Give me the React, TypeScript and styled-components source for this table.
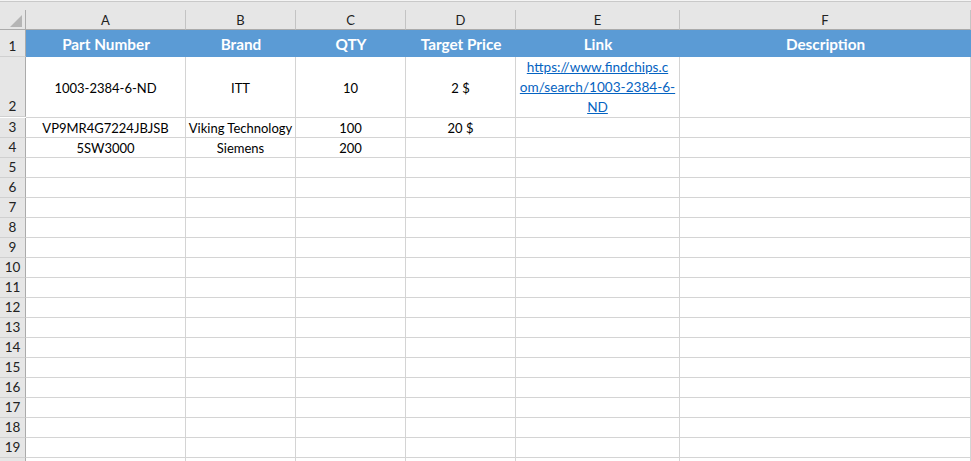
import React from 'react'
import styled, { createGlobalStyle } from 'styled-components'

const GlobalStyle = createGlobalStyle`
    html, body {
        margin: 0;
        padding: 0;
        background: #ffffff;
        overflow: hidden;
    }
    body {
        font-family: Lato, "Open Sans", sans-serif;
    }
`

const columns = [
    { key: 'A', width: 160, title: 'Part Number' },
    { key: 'B', width: 110, title: 'Brand' },
    { key: 'C', width: 110, title: 'QTY' },
    { key: 'D', width: 110, title: 'Target Price' },
    { key: 'E', width: 164, title: 'Link' },
    { key: 'F', width: 291, title: 'Description' },
]

type RowData = { height: number, cells: (string | null)[], link?: string[] }

const rows: RowData[] = [
    { height: 60, cells: ['1003-2384-6-ND', 'ITT', '10', '2 $', null, ''], link: ['https://www.findchips.c', 'om/search/1003-2384-6-', 'ND'] },
    { height: 20, cells: ['VP9MR4G7224JBJSB', 'Viking Technology', '100', '20 $', '', ''] },
    { height: 20, cells: ['5SW3000', 'Siemens', '200', '', '', ''] },
    ...Array.from({ length: 16 }, () => ({ height: 20, cells: ['', '', '', '', '', ''] })),
]

export default function App() {
    const template = `26px ${columns.map(c => c.width + 'px').join(' ')}`
    return (
        <>
            <GlobalStyle />
            <Sheet>
                <TopStrip />
                <Grid $columns={template}>
                    <Corner>
                        <svg width="12" height="12" viewBox="0 0 12 12">
                            <polygon points="12,0 12,12 0,12" fill="#b5b5b5" />
                        </svg>
                    </Corner>
                    {columns.map(c => <ColHead key={c.key}>{c.key}</ColHead>)}

                    <RowHead $height={27}>1</RowHead>
                    {columns.map(c => <TitleCell key={c.key}>{c.title}</TitleCell>)}

                    {rows.map((r, i) => (
                        <React.Fragment key={i}>
                            <RowHead $height={r.height}>{i + 2}</RowHead>
                            {r.cells.map((v, j) => (
                                r.link && j === 4
                                    ? <LinkCell key={j}>{r.link.map((l, k) => <LinkLine key={k}>{l}</LinkLine>)}</LinkCell>
                                    : <Cell key={j}>{v}</Cell>
                            ))}
                        </React.Fragment>
                    ))}

                    {/* row 20, only its top edge is on screen */}
                    <RowHead $height={4} />
                    {columns.map(c => <Cell key={c.key} />)}
                </Grid>
            </Sheet>
        </>
    )
}

const Sheet = styled.div`
    width: 971px;
    height: 461px;
    overflow: hidden;
    font-family: Lato, "Open Sans", sans-serif;
`

const TopStrip = styled.div`
    height: 10px;
    box-sizing: border-box;
    background: #e6e6e6;
    border-top: 1px solid #f4f4f4;
    box-shadow: inset 0 1px 0 #c9c9c9;
`

const Grid = styled.div<{ $columns: string }>`
    display: grid;
    grid-template-columns: ${p => p.$columns};
    grid-auto-rows: auto;
`

const Corner = styled.div`
    height: 20px;
    box-sizing: border-box;
    background: #e6e6e6;
    border-right: 1px solid #ababab;
    border-bottom: 1px solid #ababab;
    display: flex;
    align-items: flex-end;
    justify-content: flex-end;
    padding: 0 3px 2px 0;
`

const ColHead = styled.div`
    height: 20px;
    box-sizing: border-box;
    background: #e6e6e6;
    border-right: 1px solid #c3c3c3;
    border-bottom: 1px solid #ababab;
    color: #222;
    font-size: 13px;
    display: flex;
    align-items: center;
    justify-content: center;
    padding-top: 1px;
`

const RowHead = styled.div<{ $height: number }>`
    height: ${p => p.$height}px;
    box-sizing: border-box;
    background: #e6e6e6;
    border-right: 1px solid #ababab;
    border-bottom: 1px solid #d0d0d0;
    color: #222;
    font-size: 13.5px;
    display: flex;
    align-items: flex-end;
    justify-content: center;
    padding-bottom: 1px;
    line-height: 18px;
`

const TitleCell = styled.div`
    height: 27px;
    box-sizing: border-box;
    background: #5b9bd5;
    color: #ffffff;
    font-weight: 700;
    font-size: 15.3px;
    display: flex;
    align-items: center;
    justify-content: center;
    padding-top: 1px;
`

const Cell = styled.div`
    box-sizing: border-box;
    border-right: 1px solid #d4d4d4;
    border-bottom: 1px solid #d4d4d4;
    color: #000;
    font-size: 13px;
    display: flex;
    align-items: center;
    justify-content: center;
    white-space: nowrap;
    overflow: hidden;
    padding-top: 1px;
`

const LinkCell = styled(Cell)`
    flex-direction: column;
    justify-content: flex-start;
    padding-top: 0;
    font-size: 13.6px;
`

const LinkLine = styled.span`
    color: #0563c1;
    text-decoration: underline;
    line-height: 20px;
`
